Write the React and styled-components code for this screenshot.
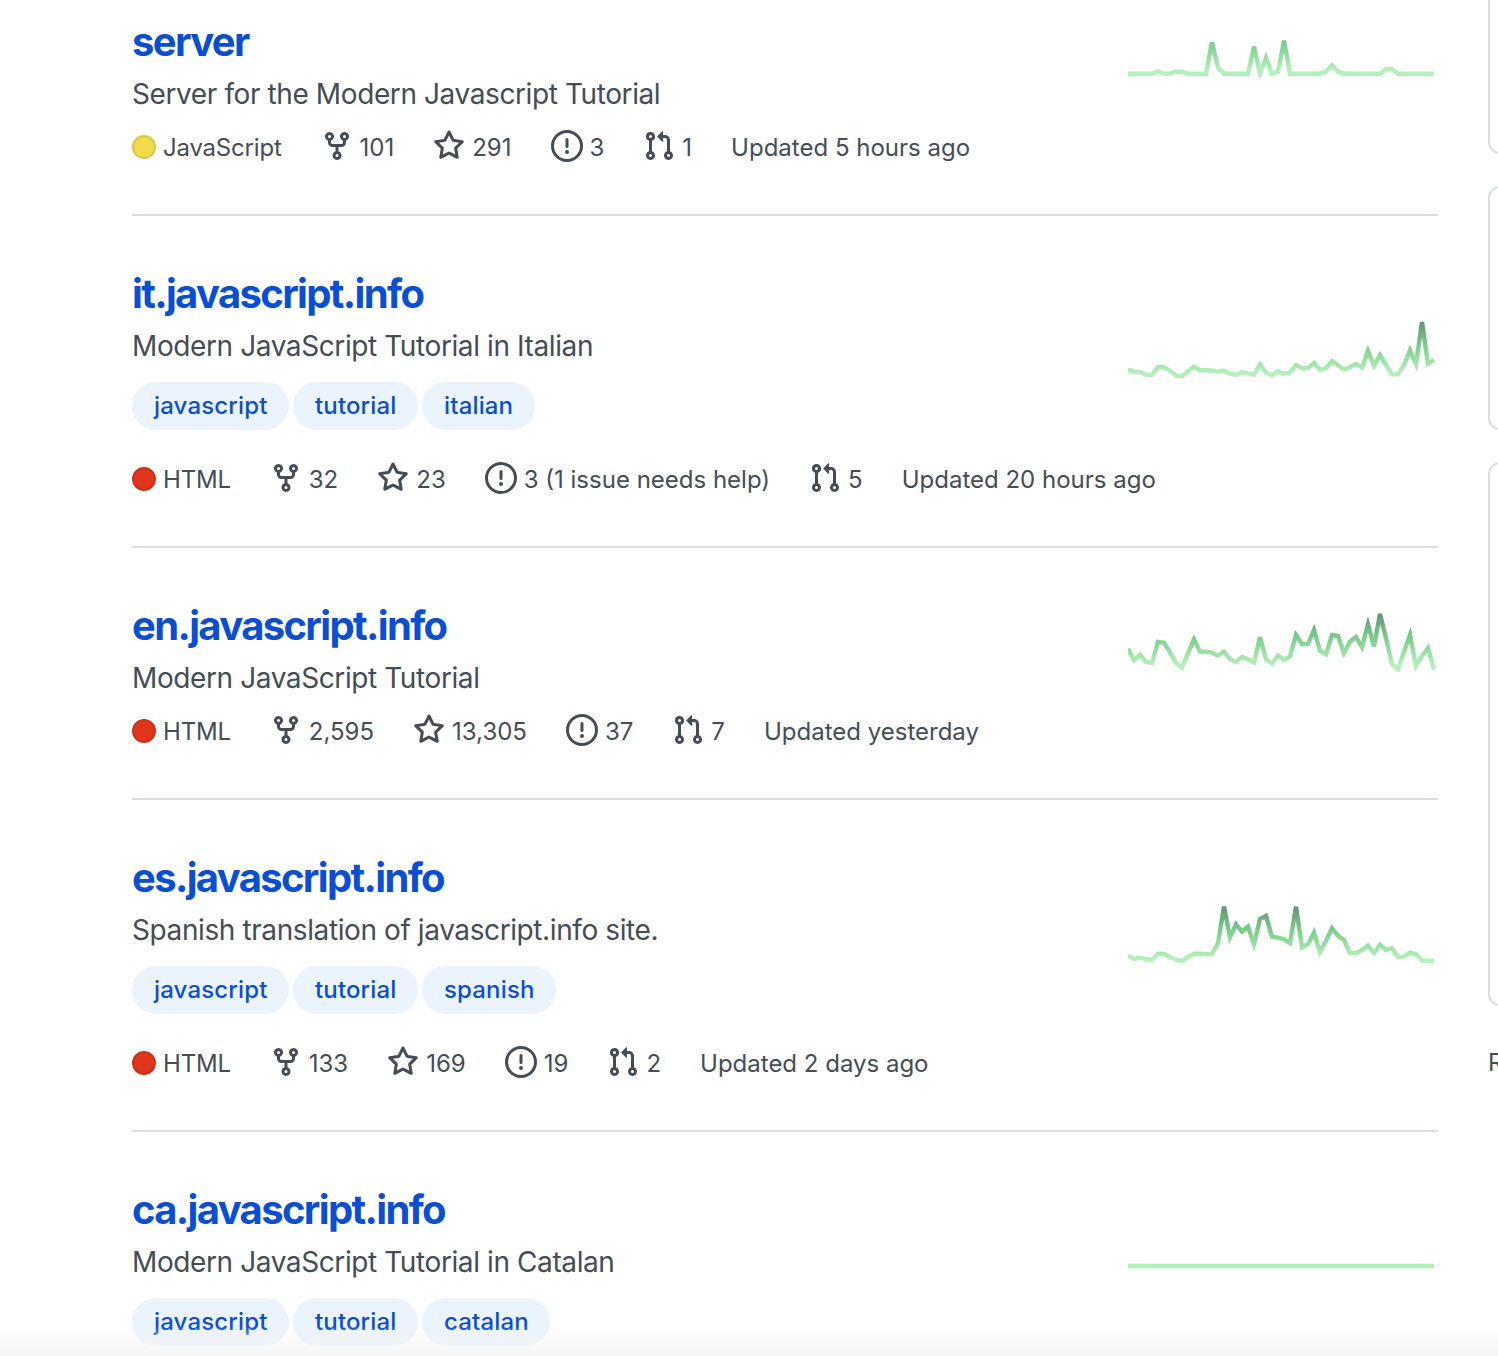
import React from 'react';
import styled, { createGlobalStyle } from 'styled-components';

const GlobalStyle = createGlobalStyle`
    html, body {
        margin: 0;
        height: 1356px;
        overflow: hidden;
        background: #fff;
    }
    body {
        font-family: Inter, "Liberation Sans", sans-serif;
        color: #444d56;
    }
`;

const Page = styled.div`
    display: flex;
    gap: 50px;
    margin-top: -36px;
    padding-left: 132px;
`;
const RepoList = styled.ul`
    flex: 0 0 1306px;
    min-width: 0;
    list-style: none;
    margin: 0;
    padding: 0;
`;
const RepoRow = styled.li`
    display: flex;
    justify-content: space-between;
    padding: 48px 0;
    border-bottom: 2px solid #d8dee4;
`;
const RepoInfo = styled.div`
    flex: 1;
    min-width: 0;
`;
const RepoName = styled.a`
    display: block;
    font-size: 40px;
    font-weight: 650;
    line-height: 60px;
    letter-spacing: -1.65px;
    color: #0a4fd1;
    text-decoration: none;
`;
const RepoDesc = styled.p`
    margin: 1px 0 15px;
    font-size: 28px;
    line-height: 42px;
    letter-spacing: -0.4px;
`;
const TagList = styled.div`
    display: flex;
    gap: 4px;
    margin-bottom: 32px;
`;
const Tag = styled.a`
    padding: 0 21.5px 0 22px;
    font-size: 24px;
    font-weight: 500;
    line-height: 48px;
    letter-spacing: 0.15px;
    color: #0a4fd1;
    background: #ebf3fd;
    border-radius: 24px;
`;
const Meta = styled.div`
    display: flex;
    align-items: center;
    gap: 39px;
    height: 36px;
    font-size: 24px;
    line-height: 36px;
    white-space: nowrap;
`;
const MetaItem = styled.span`
    display: flex;
    align-items: center;
    gap: 7px;
`;
const LangName = styled.span`
    letter-spacing: -0.2px;
`;
const LangDot = styled.span`
    width: 24px;
    height: 24px;
    margin-bottom: 3px;
    box-sizing: border-box;
    border-radius: 50%;
    background: ${p => p.$color};
    border: 2px solid rgba(27, 31, 35, 0.1);
`;
const Icon = styled.svg`
    width: 32px;
    height: 32px;
    margin-bottom: 4px;
    fill: #444d56;
`;
const Graph = styled.svg`
    flex: 0 0 310px;
    height: 60px;
    margin-top: ${p => p.$top}px;
`;
const Sidebar = styled.aside`
    flex: 0 0 300px;
    display: flex;
    flex-direction: column;
    gap: 32px;
`;
const SideCard = styled.div`
    height: ${p => p.$height}px;
    box-sizing: border-box;
    border: 2px solid #d8dee4;
    border-radius: 12px;
`;
const SideText = styled.div`
    margin-top: 7px;
    font-size: 24px;
    line-height: 36px;
`;
const BottomFade = styled.div`
    position: fixed;
    left: 0;
    right: 0;
    top: 1326px;
    height: 30px;
    background: linear-gradient(rgba(244, 244, 244, 0), #f4f4f4);
    pointer-events: none;
`;

const icons = {
    fork: 'M5 5.372v.878c0 .414.336.75.75.75h4.5a.75.75 0 0 0 .75-.75v-.878a2.25 2.25 0 1 1 1.5 0v.878a2.25 2.25 0 0 1-2.25 2.25h-1.5v2.128a2.251 2.251 0 1 1-1.5 0V8.5h-1.5A2.25 2.25 0 0 1 3.5 6.25v-.878a2.25 2.25 0 1 1 1.5 0ZM5 3.25a.75.75 0 1 0-1.5 0 .75.75 0 0 0 1.5 0Zm6.75.75a.75.75 0 1 0 0-1.5.75.75 0 0 0 0 1.5Zm-3 8.75a.75.75 0 1 0-1.5 0 .75.75 0 0 0 1.5 0Z',
    star: 'M8 .25a.75.75 0 0 1 .673.418l1.882 3.815 4.21.612a.75.75 0 0 1 .416 1.279l-3.046 2.97.719 4.192a.751.751 0 0 1-1.088.791L8 12.347l-3.766 1.98a.75.75 0 0 1-1.088-.79l.72-4.194L.818 6.374a.75.75 0 0 1 .416-1.28l4.21-.611L7.327.668A.75.75 0 0 1 8 .25Zm0 2.445L6.615 5.5a.75.75 0 0 1-.564.41l-3.097.45 2.24 2.184a.75.75 0 0 1 .216.664l-.528 3.084 2.769-1.456a.75.75 0 0 1 .698 0l2.77 1.456-.53-3.084a.75.75 0 0 1 .216-.664l2.24-2.183-3.096-.45a.75.75 0 0 1-.564-.41L8 2.694Z',
    issue: 'M8 1.5a6.5 6.5 0 100 13 6.5 6.5 0 000-13zM0 8a8 8 0 1116 0A8 8 0 010 8zm9 3a1 1 0 11-2 0 1 1 0 012 0zm-.25-6.25a.75.75 0 00-1.5 0v3.5a.75.75 0 001.5 0v-3.5z',
    pull: 'M1.5 3.25a2.25 2.25 0 1 1 3 2.122v5.256a2.251 2.251 0 1 1-1.5 0V5.372A2.25 2.25 0 0 1 1.5 3.25Zm5.677-.177L9.573.677A.25.25 0 0 1 10 .854V2.5h1A2.5 2.5 0 0 1 13.5 5v5.628a2.251 2.251 0 1 1-1.5 0V5a1 1 0 0 0-1-1h-1v1.646a.25.25 0 0 1-.427.177L7.177 3.427a.25.25 0 0 1 0-.354ZM3.75 2.5a.75.75 0 1 0 0 1.5.75.75 0 0 0 0-1.5Zm0 9.5a.75.75 0 1 0 0 1.5.75.75 0 0 0 0-1.5Zm8.25.75a.75.75 0 1 0 1.5 0 .75.75 0 0 0-1.5 0Z',
};

const JS = { name: 'JavaScript', color: '#f0dc48' };
const HTML = { name: 'HTML', color: '#e0361b' };

const repos = [
    {
        name: 'server', desc: 'Server for the Modern Javascript Tutorial', lang: JS,
        forks: '101', stars: '291', issues: '3', pulls: '1', updated: 'Updated 5 hours ago',
        graphTop: 6, shift: -18,
        points: [221, 221, 221, 221, 221, 214, 221, 221, 215, 215, 221, 221, 221, 221, 127, 203, 221, 221, 221, 221, 221, 140, 221, 173, 221, 215, 122, 221, 221, 221, 221, 221, 221, 215, 196, 215, 221, 221, 221, 221, 221, 221, 221, 208, 208, 221, 221, 221, 221, 221, 221, 221],
    },
    {
        name: 'it.javascript.info', desc: 'Modern JavaScript Tutorial in Italian', lang: HTML,
        tags: ['javascript', 'tutorial', 'italian'],
        forks: '32', stars: '23', issues: '3 (1 issue needs help)', pulls: '5', updated: 'Updated 20 hours ago',
        graphTop: 56, shift: -20,
        points: [209, 215, 216, 224, 224, 202, 202, 213, 226, 229, 214, 200, 211, 211, 212, 215, 212, 221, 225, 217, 220, 224, 193, 218, 226, 214, 221, 218, 195, 205, 205, 189, 210, 205, 184, 196, 209, 202, 192, 203, 153, 197, 166, 195, 223, 223, 196, 151, 193, 66, 191, 180],
    },
    {
        name: 'en.javascript.info', desc: 'Modern JavaScript Tutorial', lang: HTML,
        forks: '2,595', stars: '13,305', issues: '37', pulls: '7', updated: 'Updated yesterday',
        graphTop: 16, shift: -12,
        points: [146, 181, 165, 186, 189, 126, 128, 158, 190, 203, 160, 118, 155, 155, 158, 167, 155, 178, 187, 171, 178, 188, 112, 178, 191, 167, 180, 170, 105, 132, 132, 90, 153, 163, 105, 108, 160, 125, 111, 142, 73, 140, 42, 115, 193, 208, 155, 105, 198, 168, 145, 208],
    },
    {
        name: 'es.javascript.info', desc: 'Spanish translation of javascript.info site.', lang: HTML,
        tags: ['javascript', 'tutorial', 'spanish'],
        forks: '133', stars: '169', issues: '19', pulls: '2', updated: 'Updated 2 days ago',
        graphTop: 57, shift: -10,
        points: [182, 192, 188, 193, 195, 176, 177, 186, 194, 198, 186, 176, 176, 178, 178, 145, 35, 127, 88, 110, 95, 148, 72, 63, 125, 128, 133, 145, 35, 157, 148, 113, 172, 137, 100, 122, 135, 175, 174, 165, 152, 175, 149, 165, 160, 187, 185, 173, 178, 196, 197, 198],
    },
    {
        // the rest of this row is below the fold
        name: 'ca.javascript.info', desc: 'Modern JavaScript Tutorial in Catalan', lang: HTML,
        tags: ['javascript', 'tutorial', 'catalan'],
        graphTop: 30, shift: 56,
        points: new Array(52).fill(0),
    },
];

const OctIcon = ({ name }) => (
    <Icon viewBox="0 0 16 16"><path fillRule="evenodd" d={icons[name]} /></Icon>
);

const Sparkline = ({ id, top, shift, points }) => {
    const line = points.map((v, i) => `${i * 6},${(v / 3 + shift).toFixed(1)}`).join(' ');
    return (
        <Graph $top={top} viewBox="0 0 310 60">
            <defs>
                <linearGradient id={id} x1="0" y1="0" x2="0" y2="60" gradientUnits="userSpaceOnUse">
                    <stop offset="0.05" stopColor="#66977a" />
                    <stop offset="0.45" stopColor="#7fd08e" />
                    <stop offset="0.88" stopColor="#b4f0bb" />
                </linearGradient>
            </defs>
            <polyline points={line} fill="none" stroke={`url(#${id})`} strokeWidth="4.4" />
        </Graph>
    );
};

const Repo = ({ repo, index }) => (
    <RepoRow>
        <RepoInfo>
            <RepoName>{repo.name}</RepoName>
            <RepoDesc>{repo.desc}</RepoDesc>
            {repo.tags && (
                <TagList>
                    {repo.tags.map(t => <Tag key={t}>{t}</Tag>)}
                </TagList>
            )}
            {repo.updated && (
                <Meta>
                    <MetaItem><LangDot $color={repo.lang.color} /><LangName>{repo.lang.name}</LangName></MetaItem>
                    <MetaItem><OctIcon name="fork" />{repo.forks}</MetaItem>
                    <MetaItem><OctIcon name="star" />{repo.stars}</MetaItem>
                    <MetaItem><OctIcon name="issue" />{repo.issues}</MetaItem>
                    <MetaItem><OctIcon name="pull" />{repo.pulls}</MetaItem>
                    <span>{repo.updated}</span>
                </Meta>
            )}
        </RepoInfo>
        <Sparkline id={`spark-${index}`} top={repo.graphTop} shift={repo.shift} points={repo.points} />
    </RepoRow>
);

const App = () => {
    return (
        <Page>
            <GlobalStyle />
            <RepoList>
                {repos.map((r, i) => <Repo key={r.name} repo={r} index={i} />)}
            </RepoList>
            <Sidebar>
                <SideCard $height={190} />
                <SideCard $height={244} />
                <SideCard $height={544} />
                <SideText>R</SideText>
            </Sidebar>
            <BottomFade />
        </Page>
    );
};

export default App;
